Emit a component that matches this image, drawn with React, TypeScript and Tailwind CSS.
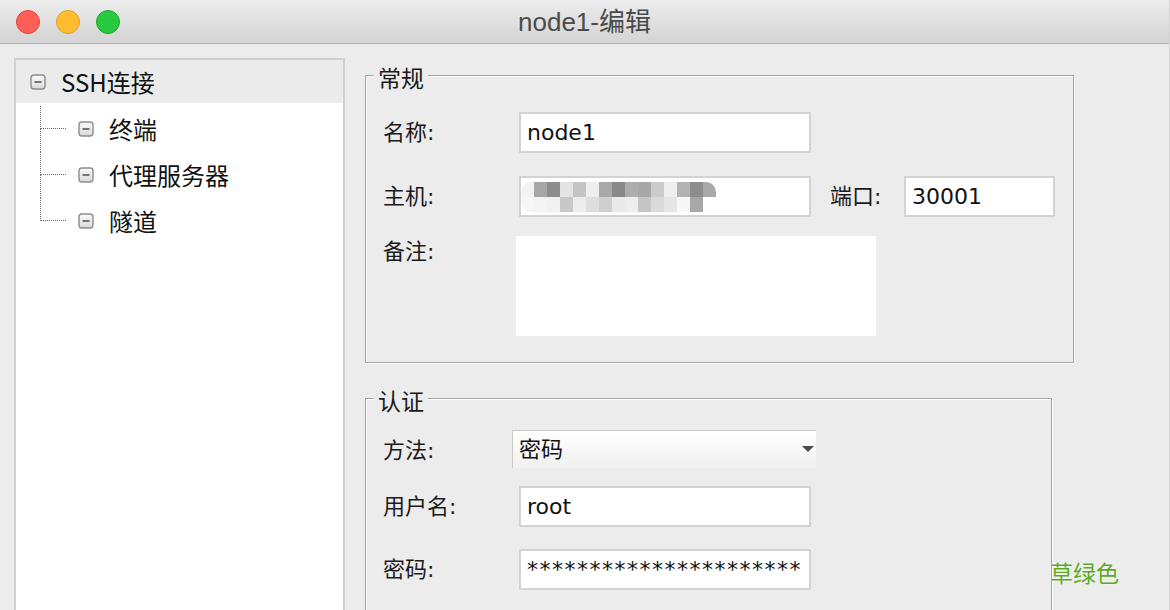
import React from "react";

const ui = "font-['DejaVu_Sans','Noto_Sans_CJK_SC',sans-serif]";

function TreeIcon() {
  return (
    <svg width="16" height="16" viewBox="0 0 16 16" className="shrink-0">
      <defs>
        <linearGradient id="tg" x1="0" y1="0" x2="0" y2="1">
          <stop offset="0" stopColor="#fafafa" />
          <stop offset="1" stopColor="#d9d9d9" />
        </linearGradient>
      </defs>
      <rect x="1" y="1" width="14" height="14" rx="3" fill="url(#tg)" stroke="#8d8d8d" strokeWidth="1.4" />
      <line x1="4.5" y1="8" x2="11.5" y2="8" stroke="#555" strokeWidth="1.6" />
    </svg>
  );
}

function TreeChild({ label, last }: { label: string; last?: boolean }) {
  return (
    <div className="flex h-[46px] items-stretch">
      {/* dotted connector */}
      <div className="flex w-[26px] flex-col">
        <div className="h-1/2 border-b border-l border-dotted border-[#6a6a6a]" />
        <div className={last ? "h-1/2" : "h-1/2 border-l border-dotted border-[#6a6a6a]"} />
      </div>
      <div className="ml-[12px] flex items-center gap-[15px]">
        <TreeIcon />
        <span className="text-[24px] leading-none text-[#111]">{label}</span>
      </div>
    </div>
  );
}

function Field({ value, w = "w-[292px]", extra = "" }: { value: string; w?: string; extra?: string }) {
  return (
    <div className={`${w} flex h-[41px] items-center overflow-hidden border-2 border-[#d3d3d3] bg-white pl-[6px]`}>
      <span className={`whitespace-nowrap text-[22px] leading-none text-[#111] ${extra}`}>{value}</span>
    </div>
  );
}

function Label({ text, w = "w-[136px]" }: { text: string; w?: string }) {
  return <div className={`${w} shrink-0 text-[22px] leading-[22px] text-[#1a1a1a]`}>{text}</div>;
}

const mosaicTop = ["#f3f3f3", "#a7a7a7", "#8e8e8e", "#e4e4e4", "#c4c4c4", "#efefef", "#a9a9a9", "#898989", "#adadad", "#a8a8a8", "#cbcbcb", "#eeeeee", "#b2b2b2", "#8d8d8d", "#a9a9a9"];
const mosaicBot = ["#f6f6f6", "#f4f4f4", "#f1f1f1", "#c8c8c8", "#ececec", "#dedede", "#cfcfcf", "#e9e9e9", "#eeeeee", "#c5c5c5", "#dadada", "#e5e5e5", "#f7f7f7", "#a8a8a8", "#ffffff"];

function Mosaic() {
  return (
    <svg width="195" height="30" viewBox="0 0 195 30">
      <defs>
        <filter id="bl">
          <feGaussianBlur stdDeviation="0.7" />
        </filter>
        <clipPath id="cp">
          <rect x="0" y="0" width="195" height="30" rx="10" />
        </clipPath>
      </defs>
      <g filter="url(#bl)" clipPath="url(#cp)">
        {mosaicTop.map((c, i) => (
          <rect key={"t" + i} x={i * 13} y="0" width="13" height="15" fill={c} />
        ))}
        {mosaicBot.map((c, i) => (
          <rect key={"b" + i} x={i * 13} y="15" width="13" height="15" fill={c} />
        ))}
      </g>
    </svg>
  );
}

export default function App() {
  return (
    <div className={`relative flex h-[610px] w-[1170px] flex-col overflow-hidden border-r border-[#d4d4d4] bg-[#ececec] ${ui}`}>
      {/* Title bar */}
      <div className="grid h-[44px] shrink-0 grid-cols-[1fr_auto_1fr] items-center border-b border-[#b2b2b2] bg-linear-to-b from-[#ececec] to-[#d4d4d4]">
        <div className="flex items-center gap-[16px] pl-[16px]">
          <div className="h-[24px] w-[24px] rounded-full border border-[#e0443e] bg-[#ff5f57]" />
          <div className="h-[24px] w-[24px] rounded-full border border-[#dea123] bg-[#febc2e]" />
          <div className="h-[24px] w-[24px] rounded-full border border-[#1aab29] bg-[#28c840]" />
        </div>
        <div className="font-['Liberation_Sans','Noto_Sans_CJK_SC',sans-serif] text-[26px] leading-none text-[#4b4b4b]">
          node1-编辑
        </div>
        <div />
      </div>

      <div className="flex min-h-0 flex-1">
        {/* Tree panel */}
        <div className="ml-[14px] mt-[14px] h-[600px] w-[331px] shrink-0 border-2 border-[#cfcfcf] bg-white font-['Noto_Sans_CJK_SC',sans-serif]">
          <div className="flex h-[43px] items-center gap-[15px] bg-[#ebebeb] pl-[14px]">
            <TreeIcon />
            <span className="text-[24px] leading-none text-[#111]">SSH连接</span>
          </div>
          <div className="mt-[3px] pl-[24px]">
            <TreeChild label="终端" />
            <TreeChild label="代理服务器" />
            <TreeChild label="隧道" last />
          </div>
        </div>

        {/* Form */}
        <div className="ml-[20px] flex flex-col pt-[16px]">
          <fieldset className="w-[709px] border border-[#a4a4a4] shadow-[inset_1px_1px_0_#fff,1px_1px_0_#fff]">
            <legend className="ml-[8px] bg-[#ececec] px-[4px] pt-[8px] text-[23px] leading-[22px] text-[#1a1a1a]">常规</legend>
            <div className="flex flex-col pb-[26px] pl-[17px] pt-[22px]">
              <div className="flex items-center">
                <Label text="名称:" />
                <Field value="node1" />
              </div>
              <div className="mt-[23px] flex items-center">
                <Label text="主机:" />
                <div className="flex h-[41px] w-[292px] items-center border-2 border-[#d3d3d3] bg-white">
                  <Mosaic />
                </div>
                <Label text="端口:" w="ml-[19px] w-[74px]" />
                <Field value="30001" w="w-[151px]" />
              </div>
              <div className="mt-[19px] flex items-start">
                <Label text="备注:" w="mt-[5px] w-[133px]" />
                <div className="h-[100px] w-[360px] bg-white" />
              </div>
            </div>
          </fieldset>

          <fieldset className="mt-[20px] w-[687px] border border-[#a4a4a4] shadow-[inset_1px_1px_0_#fff,1px_1px_0_#fff]">
            <legend className="ml-[8px] bg-[#ececec] px-[4px] pt-[8px] text-[23px] leading-[22px] text-[#1a1a1a]">认证</legend>
            <div className="flex flex-col pb-[26px] pl-[17px] pt-[17px]">
              <div className="flex items-center">
                <Label text="方法:" w="mt-[4px] w-[129px]" />
                <div className="flex h-[38px] w-[304px] items-center justify-between border-l border-t border-[#c9c9c9] bg-linear-to-b from-white to-[#f0f0f0] pl-[6px] pr-[1px]">
                  <span className="text-[22px] leading-none text-[#111]">密码</span>
                  <svg width="14" height="7" viewBox="0 0 14 7">
                    <polygon points="1,0 13,0 7,6" fill="#4a4a4a" />
                  </svg>
                </div>
              </div>
              <div className="mt-[18px] flex items-center">
                <Label text="用户名:" />
                <Field value="root" />
              </div>
              <div className="mt-[22px] flex items-center">
                <Label text="密码:" />
                <Field value="**********************" extra="tracking-[1.5px]" />
              </div>
            </div>
          </fieldset>
        </div>
      </div>

      {/* watermark */}
      <div className="absolute left-[1050px] top-[563px] text-[23px] leading-none text-[#5cab1e] [text-shadow:0_0_2px_#fff]">
        草绿色
      </div>
    </div>
  );
}
